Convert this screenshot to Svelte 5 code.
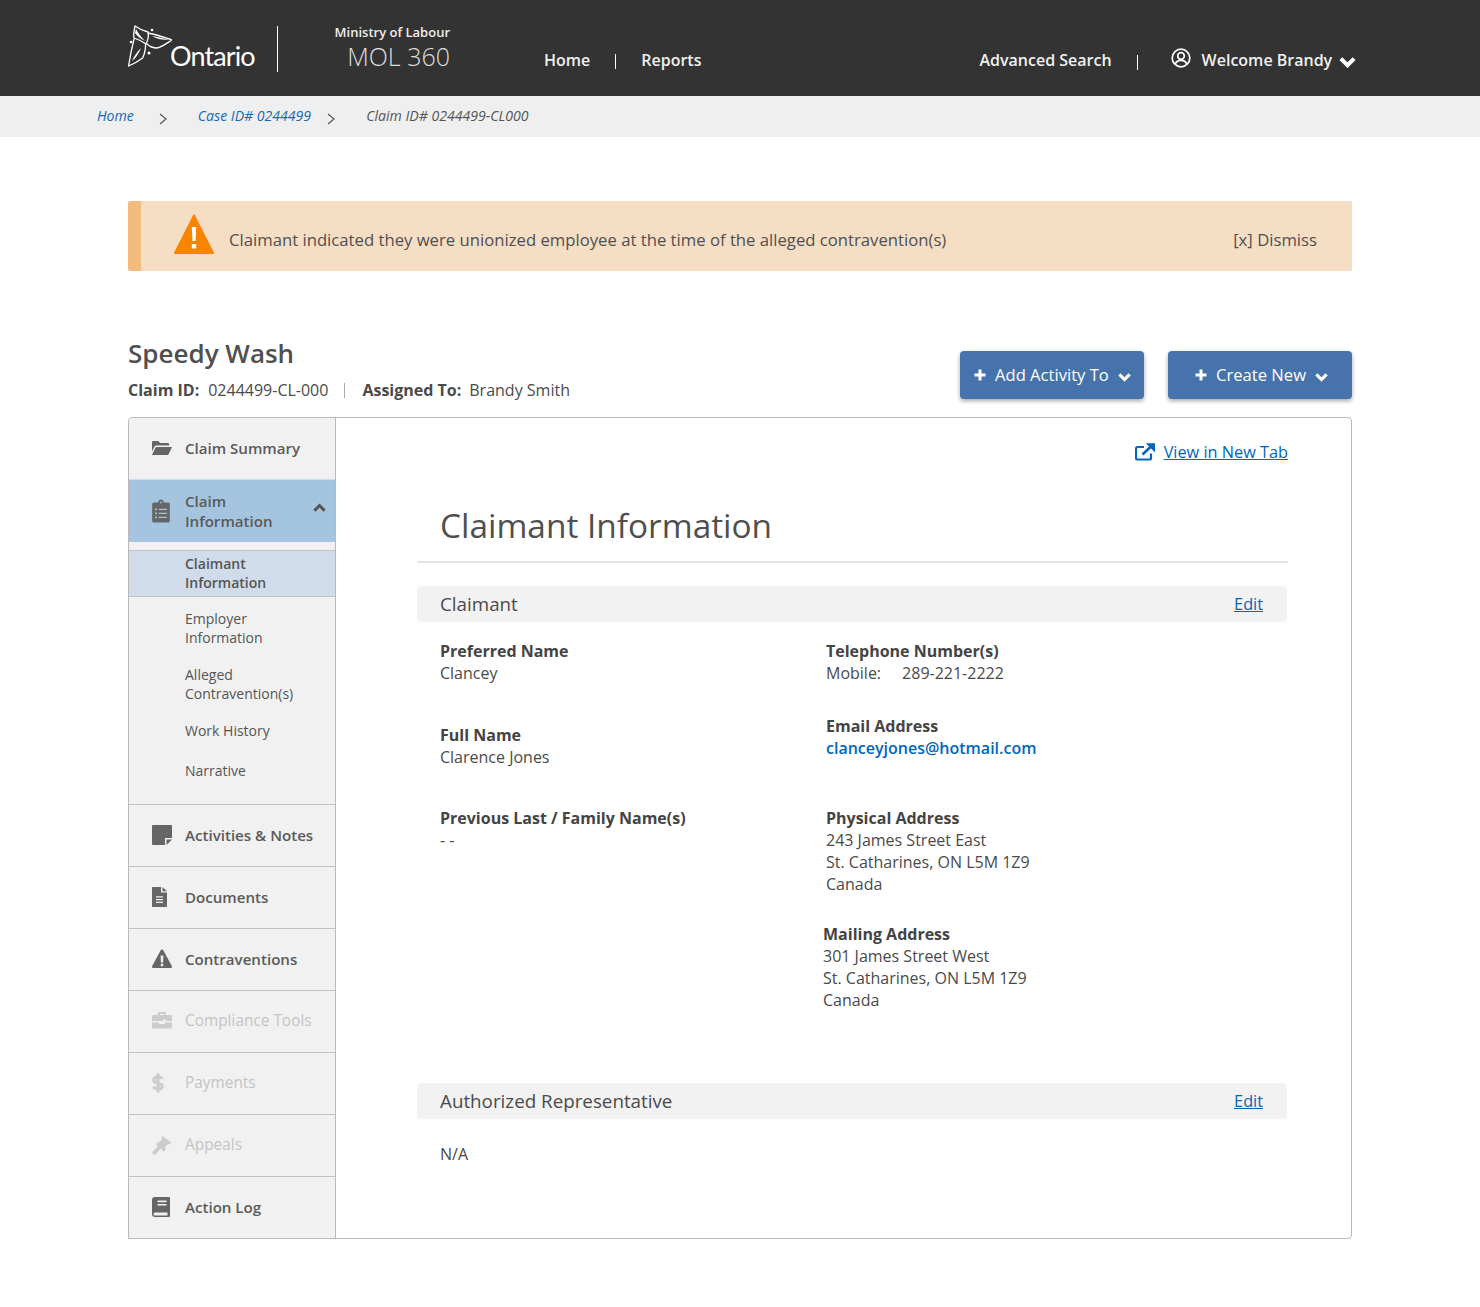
<script lang="ts">
	const subItems = [
		{ label: ['Claimant', 'Information'], active: true },
		{ label: ['Employer', 'Information'] },
		{ label: ['Alleged', 'Contravention(s)'] },
		{ label: ['Work History'] },
		{ label: ['Narrative'] }
	];
	const lowerItems = [
		{ id: 'note', label: 'Activities & Notes' },
		{ id: 'doc', label: 'Documents' },
		{ id: 'warn', label: 'Contraventions' },
		{ id: 'tools', label: 'Compliance Tools', disabled: true },
		{ id: 'dollar', label: 'Payments', disabled: true },
		{ id: 'gavel', label: 'Appeals', disabled: true },
		{ id: 'book', label: 'Action Log' }
	];
</script>

{#snippet chevron(cls: string)}
	<svg class={cls} viewBox="0 0 14 10" aria-hidden="true"><path d="M1.500 2.200 7 7.700l5.500-5.500" fill="none" stroke="currentColor" stroke-width="3.400" /></svg>
{/snippet}

{#snippet plus()}
	<svg class="plus" viewBox="0 0 12 12" aria-hidden="true"><path d="M6 .5v11M.5 6h11" stroke="currentColor" stroke-width="3" /></svg>
{/snippet}

{#snippet navIcon(id: string)}
	{#if id === 'note'}
		<svg class="nav-icon" viewBox="0 0 20 20"><path d="M1 0h18a1 1 0 0 1 1 1v12h-7v7H1a1 1 0 0 1-1-1V1a1 1 0 0 1 1-1zM14.500 14.500H20L14.500 20z" fill="currentColor" /></svg>
	{:else if id === 'doc'}
		<svg class="nav-icon" viewBox="0 0 20 20"><path fill-rule="evenodd" d="M0 .8A.8.8 0 0 1 .8 0H9v5.500h6v13.700a.8.8 0 0 1-.8.8H.8a.8.8 0 0 1-.8-.8zM10.500 0 15 4.200h-4.500zM4 9.300v1.300h7V9.300zm0 2.700v1.300h7V12zm0 2.700V16h7v-1.300z" fill="currentColor" /></svg>
	{:else if id === 'warn'}
		<svg class="nav-icon" viewBox="0 0 20 20"><path fill-rule="evenodd" d="M10 .5c.6 0 1 .3 1.300.8l8.500 15.800c.5 1-.2 1.900-1.200 1.900H1.400c-1 0-1.700-.9-1.200-1.900L8.700 1.300C9 .8 9.400.5 10 .5zM8.600 6.500l.3 7h2.200l.3-7zm1.400 8.100a1.400 1.400 0 1 0 0 2.800 1.400 1.400 0 0 0 0-2.800z" fill="currentColor" /></svg>
	{:else if id === 'tools'}
		<svg class="nav-icon" viewBox="0 0 20 20"><path fill-rule="evenodd" d="M6 4V2.500C6 1.700 6.700 1 7.500 1h5c.8 0 1.500.7 1.500 1.500V4h4.500c.8 0 1.500.7 1.500 1.500V10h-6V8.500h-3V10H0V5.500C0 4.700.7 4 1.500 4zm2-1v1h4V3zM0 11.500h7V13h6v-1.500h7V16c0 .8-.7 1.500-1.500 1.500h-17C.7 17.500 0 16.800 0 16z" fill="currentColor" /></svg>
	{:else if id === 'dollar'}
		<svg class="nav-icon" viewBox="2 0 20 20"><path d="M12.200 6C11.600 4.600 10 3.900 8.200 3.900 5.700 3.800 3.700 5 3.700 7c0 4.500 8.700 2.300 8.700 6.200 0 2-2.100 3.100-4.400 3C5.800 16.100 4 15 3.300 13.600M8 .5v19" fill="none" stroke="currentColor" stroke-width="3" /></svg>
	{:else if id === 'gavel'}
		<svg class="nav-icon" viewBox="0 0 20 20"><path d="m10.500 1 8.800 6.500-1.400 1.900-2-.5-2.900 3.900.6 2-1.500 1.900L3.800 9.200l1.400-1.900 2 .3 3-3.900-.9-2zM6.500 10.500l3 2.300-5.800 6.300c-.7.700-1.800.8-2.600.2-.9-.7-1-1.900-.3-2.700z" fill="currentColor" /></svg>
	{:else if id === 'book'}
		<svg class="nav-icon" viewBox="0 0 20 20"><path fill-rule="evenodd" d="M3 0h14a1 1 0 0 1 1 1v18a1 1 0 0 1-1 1H3a3 3 0 0 1-3-3V3a3 3 0 0 1 3-3zm2.500 3.500v1.700h9V3.500zm0 3.400v1.700h9V6.900zM3 15.500a1.500 1.500 0 0 0 0 3h12.500v-3z" fill="currentColor" /></svg>
	{/if}
{/snippet}

<header class="topbar">
	<div class="logo">
		<svg class="trillium" viewBox="0 0 44 42" aria-hidden="true">
			<g fill="none" stroke="#fff" stroke-width="1.300" stroke-linejoin="round" stroke-linecap="round">
				<path d="M7 1c-1 5-2 9-1 12 3 1 8 3 12 6 2-4 3-8 2-12C16 6 11 4 7 1z" />
				<path d="M20 8c7 1 15 4 24 7-5 3-10 7-15 8-3 0-7-1-10-4" />
				<path d="M6 14C4 22 2 32 .6 41c5-2 10-5 14-8 2-4 3-9 3-14" />
			</g>
			<path d="M8 4c2 4 5 8 9 12-4-2-8-5-10-8zM24 11c6 1 11 2 17 4-6 0-12-1-17-4zM4 36c2-5 5-9 9-13-2 5-5 10-9 13z" fill="#fff" />
			<circle cx="24" cy="5" r="1.300" fill="#fff" />
			<circle cx="21" cy="28" r="1.500" fill="#fff" />
			<circle cx="3" cy="17" r="1.300" fill="#fff" />
		</svg>
		<span class="wordmark">Ontario</span>
	</div>
	<div class="brand-divider"></div>
	<div class="app-name">
		<div class="ministry">Ministry of Labour</div>
		<div class="mol">MOL 360</div>
	</div>
	<nav class="main-nav">
		<a href="#home">Home</a>
		<span class="nav-sep"></span>
		<a href="#reports">Reports</a>
	</nav>
	<div class="user-nav">
		<a href="#search">Advanced Search</a>
		<span class="nav-sep user-sep"></span>
		<svg class="avatar" viewBox="0 0 20 20" aria-hidden="true">
			<circle cx="10" cy="10" r="8.800" fill="none" stroke="#fff" stroke-width="1.700" />
			<circle cx="10" cy="8" r="3.300" fill="none" stroke="#fff" stroke-width="1.700" />
			<path d="M4.300 16c1-2.500 3-3.600 5.700-3.600s4.700 1.100 5.700 3.600" fill="none" stroke="#fff" stroke-width="1.700" />
		</svg>
		<a class="welcome" href="#user">Welcome Brandy</a>
		{@render chevron('user-chevron')}
	</div>
</header>

<div class="breadcrumb">
	<a href="#home">Home</a>
	<svg class="crumb-sep first" viewBox="0 0 8 12"><path d="m1 1 6 5-6 5" fill="none" stroke="#555" stroke-width="1.200" /></svg>
	<a href="#case">Case ID# 0244499</a>
	<svg class="crumb-sep" viewBox="0 0 8 12"><path d="m1 1 6 5-6 5" fill="none" stroke="#555" stroke-width="1.200" /></svg>
	<span>Claim ID# 0244499-CL000</span>
</div>

<main class="page">
	<div class="alert">
		<svg class="alert-icon" viewBox="0 0 40 40" aria-hidden="true">
			<path d="M20 1 39.500 39.500H.5z" fill="#f98400" stroke="#f98400" stroke-width="1.500" stroke-linejoin="round" />
			<path d="M17.800 13h4.400l-.6 14h-3.200zM17.800 30h4.400v4.400h-4.400z" fill="#fff" />
		</svg>
		<span class="alert-text">Claimant indicated they were unionized employee at the time of the alleged contravention(s)</span>
		<span class="dismiss">[x] Dismiss</span>
	</div>

	<div class="claim-head">
		<div>
			<h1>Speedy Wash</h1>
			<div class="claim-meta">
				<b>Claim ID:</b><span>0244499-CL-000</span><i></i><b>Assigned To:</b><span>Brandy Smith</span>
			</div>
		</div>
		<div class="actions">
			<button class="add">{@render plus()}Add Activity To{@render chevron('btn-chevron')}</button>
			<button class="create">{@render plus()}Create New{@render chevron('btn-chevron')}</button>
		</div>
	</div>

	<div class="panel">
		<aside class="sidebar">
			<div class="nav-item summary">
				<svg class="nav-icon" viewBox="0 0 20 20"><path d="M0 4.200C0 3.500.5 3 1.200 3h5l2 2h7.600c.7 0 1.200.5 1.200 1.200V7.500H4.500c-.9 0-1.700.5-2.100 1.300L0 13.500zM4.600 9H20l-3.400 7.200c-.2.500-.7.800-1.200.8H0l3.400-7.200c.2-.5.700-.8 1.200-.8z" fill="currentColor" /></svg>
				<span>Claim Summary</span>
			</div>
			<div class="nav-item open">
				<svg class="nav-icon" viewBox="0 0 20 24" preserveAspectRatio="none"><path fill-rule="evenodd" d="M7 3.500C7 1.800 8.300.5 10 .5s3 1.300 3 3h5c1 0 1.800.8 1.800 1.800v16.400c0 1-.8 1.800-1.800 1.800H2c-1 0-1.800-.8-1.800-1.800V5.300c0-1 .8-1.800 1.800-1.800zm2 0a1 1 0 1 0 2 0 1 1 0 0 0-2 0zM3.500 9.500v1.800h2V9.500zm4 .2v1.400h9V9.700zm-4 3.800v1.800h2v-1.800zm4 .2v1.400h9v-1.400zm-4 3.800v1.800h2v-1.800zm4 .2v1.400h9v-1.400z" fill="currentColor" /></svg>
				<span>Claim<br />Information</span>
				<svg class="caret" viewBox="0 0 14 10"><path d="M1.500 7.800 7 2.300l5.500 5.500" fill="none" stroke="currentColor" stroke-width="3.200" /></svg>
			</div>
			<ul class="sub-nav">
				{#each subItems as item}
					<li class:active={item.active}>
						{#each item.label as line}<span>{line}</span>{/each}
					</li>
				{/each}
			</ul>
			{#each lowerItems as item}
				<div class="nav-item" class:disabled={item.disabled}>
					{@render navIcon(item.id)}
					<span>{item.label}</span>
				</div>
			{/each}
		</aside>

		<section class="content">
			<div class="tab-link">
				<svg viewBox="0 0 20 18" aria-hidden="true">
					<path d="M16 10.500V15a1.500 1.500 0 0 1-1.500 1.500H2.500A1.500 1.500 0 0 1 1 15V5.500A1.500 1.500 0 0 1 2.500 4H9" fill="none" stroke="#0066bb" stroke-width="2.200" />
					<path d="M7.500 11.500 17 2.500" fill="none" stroke="#0066bb" stroke-width="2.600" />
					<path d="M12.500 1H19.500V8z" fill="#0066bb" stroke="#0066bb" stroke-width="1.400" />
				</svg>
				<a href="#tab">View in New Tab</a>
			</div>
			<h2>Claimant Information</h2>

			<div class="section-bar">
				<h3>Claimant</h3>
				<a href="#edit">Edit</a>
			</div>
			<div class="fields">
				<div class="col left">
					<div class="field">
						<strong>Preferred Name</strong>
						<span>Clancey</span>
					</div>
					<div class="field">
						<strong>Full Name</strong>
						<span>Clarence Jones</span>
					</div>
					<div class="field previous">
						<strong>Previous Last / Family Name(s)</strong>
						<span>- -</span>
					</div>
				</div>
				<div class="col right">
					<div class="field phone">
						<strong>Telephone Number(s)</strong>
						<span><em>Mobile:</em>289-221-2222</span>
					</div>
					<div class="field email">
						<strong>Email Address</strong>
						<a href="#mail">clanceyjones@hotmail.com</a>
					</div>
					<div class="field physical">
						<strong>Physical Address</strong>
						<span>243 James Street East</span>
						<span>St. Catharines, ON L5M 1Z9</span>
						<span>Canada</span>
					</div>
					<div class="field mailing">
						<strong>Mailing Address</strong>
						<span>301 James Street West</span>
						<span>St. Catharines, ON L5M 1Z9</span>
						<span>Canada</span>
					</div>
				</div>
			</div>

			<div class="section-bar rep">
				<h3>Authorized Representative</h3>
				<a href="#edit">Edit</a>
			</div>
			<p class="na">N/A</p>
		</section>
	</div>
</main>

<style>
	:global(body) {
		margin: 0;
		font-family: 'Open Sans', 'Noto Sans', sans-serif;
		color: #4a4a4a;
		background: #fff;
	}

	a {
		color: inherit;
		text-decoration: none;
	}

	.topbar {
		height: 96px;
		box-sizing: border-box;
		background: #333333;
		color: #fff;
		display: flex;
		align-items: flex-start;
		padding-left: 128px;
	}

	.logo {
		width: 149px;
		height: 46px;
		margin-top: 25px;
		display: flex;
		align-items: flex-end;
	}

	.trillium {
		width: 44px;
		height: 42px;
		flex: none;
		margin-bottom: 4px;
	}

	.wordmark {
		font-family: 'Lato', sans-serif;
		font-size: 27px;
		line-height: 34px;
		letter-spacing: -0.9px;
		margin-left: -2px;
		margin-bottom: -2px;
	}

	.brand-divider {
		width: 1px;
		height: 46px;
		margin-top: 26px;
		background: #fff;
	}

	.app-name {
		margin-left: 56px;
		width: 116px;
		text-align: right;
		padding-top: 24px;
	}

	.ministry {
		font-size: 13px;
		font-weight: 600;
		line-height: 17px;
		color: #eee;
		white-space: nowrap;
	}

	.mol {
		font-size: 25px;
		font-weight: 300;
		line-height: 32px;
		margin-top: -1px;
		color: #ddd;
		white-space: nowrap;
	}

	.main-nav,
	.user-nav {
		display: flex;
		align-items: center;
		font-size: 16px;
		font-weight: 600;
		line-height: 22px;
		margin-top: 49px;
		color: #f0f0f0;
	}

	.main-nav {
		margin-left: 94px;
	}

	.nav-sep {
		width: 1px;
		height: 15px;
		background: #fff;
		margin: 2px 25px 0 25px;
	}

	.user-nav {
		margin-left: 278px;
	}

	.user-sep {
		margin: 4px 33px 0 25px;
	}

	.avatar {
		width: 20px;
		height: 20px;
		margin: -4px 11px 0 0;
	}

	.user-chevron {
		width: 17px;
		height: 12px;
		margin: 3px 0 0 7px;
		color: #fff;
	}

	.breadcrumb {
		height: 41px;
		box-sizing: border-box;
		background: #efefef;
		padding: 0 0 2px 97px;
		display: flex;
		align-items: center;
		font-size: 14.100px;
		font-style: italic;
		color: #555;
	}

	.breadcrumb a {
		color: #1668b5;
	}

	.crumb-sep {
		width: 8px;
		height: 12px;
		margin: 7px 31px 0 16px;
	}

	.crumb-sep.first {
		margin-left: 25px;
	}

	.page {
		width: 1224px;
		margin: 64px auto 0;
		padding-bottom: 68px;
	}

	.alert {
		height: 70px;
		box-sizing: border-box;
		background: #f5dec4;
		border-left: 13px solid #f3bc7d;
		border-radius: 2px;
		display: flex;
		align-items: center;
		padding: 0 35px 0 33px;
		font-size: 16.700px;
		font-weight: 500;
		color: #505050;
	}

	.alert-icon {
		width: 40px;
		height: 40px;
		flex: none;
		margin-right: 15px;
		margin-top: -4px;
	}

	.alert-text,
	.dismiss {
		padding-top: 6px;
	}

	.alert-text {
		flex: 1;
	}

	.claim-head {
		display: flex;
		justify-content: space-between;
		margin-top: 64px;
		height: 82px;
	}

	h1 {
		margin: 0;
		font-size: 26px;
		font-weight: 600;
		line-height: 36px;
		color: #4f4f4f;
	}

	.claim-meta {
		display: flex;
		align-items: center;
		margin-top: 8px;
		font-size: 16px;
		line-height: 22px;
	}

	.claim-meta b {
		font-weight: 700;
		margin-right: 8px;
	}

	.claim-meta b:first-child {
		margin-right: 9px;
	}

	.claim-meta i {
		width: 1px;
		height: 15px;
		background: #aaa;
		margin: 0 17px 0 16px;
	}

	.actions {
		display: flex;
		gap: 24px;
		margin-top: 16px;
		height: 48px;
	}

	button {
		height: 48px;
		box-sizing: border-box;
		border: none;
		border-radius: 4px;
		background: #4673ab;
		color: #fff;
		font: 500 16.600px/22px 'Open Sans', sans-serif;
		box-shadow: 0 2px 4px rgba(0, 0, 0, 0.35);
		display: flex;
		align-items: center;
		padding: 0;
	}

	.add {
		width: 184px;
		padding-left: 14px;
	}

	.create {
		width: 184px;
		padding-left: 27px;
	}

	.plus {
		width: 12px;
		height: 12px;
		margin-right: 9px;
	}

	.btn-chevron {
		width: 13px;
		height: 10px;
		margin: 3px 0 0 9px;
	}

	.panel {
		display: flex;
		height: 822px;
		box-sizing: border-box;
		border: 1px solid #b9b9b9;
		border-radius: 4px 4px 4px 0;
	}

	.sidebar {
		width: 206px;
		flex: none;
		background: #f1f1f1;
		border-right: 1px solid #b9b9b9;
		border-radius: 4px 0 0 0;
	}

	.nav-item {
		height: 62px;
		box-sizing: border-box;
		border-top: 1px solid #c2c2c2;
		display: flex;
		align-items: center;
		padding: 0 0 2px 23px;
		font-size: 15.100px;
		font-weight: 600;
		line-height: 20px;
		color: #5a5a5a;
	}

	.nav-item > span {
		margin-left: 13px;
		white-space: nowrap;
	}

	.nav-icon {
		width: 20px;
		height: 20px;
		flex: none;
		color: #666;
	}

	.summary {
		height: 61px;
		border-top: none;
	}

	.open {
		height: 63px;
		background: #a5c4e0;
		position: relative;
		border-top: 1px solid #d0dcea;
		padding-bottom: 0;
	}

	.open .nav-icon {
		width: 18px;
		height: 24px;
	}

	.open > span {
		margin-left: 15px;
	}

	.caret {
		position: absolute;
		left: 184px;
		top: 23px;
		width: 13px;
		height: 10px;
		color: #555;
	}

	.sub-nav {
		list-style: none;
		margin: 0;
		padding: 8px 0 24px;
		font-size: 14px;
		line-height: 19px;
		font-weight: 400;
		color: #555;
	}

	.sub-nav li {
		padding: 6px 0 12px 56px;
	}

	.sub-nav li span {
		display: block;
	}

	.sub-nav li.active {
		background: #d0dcea;
		border-top: 1px solid #c2c2c2;
		border-bottom: 1px solid #c2c2c2;
		padding: 3px 0 4px 56px;
		font-weight: 600;
		margin-bottom: 12px;
	}

	.sub-nav li:nth-child(2),
	.sub-nav li:nth-child(3) {
		padding-top: 0;
		padding-bottom: 18px;
	}

	.sub-nav li:nth-child(4) {
		padding: 0 0 21px 56px;
	}

	.sub-nav li:nth-child(5) {
		padding: 0 0 0 56px;
	}

	.disabled {
		color: #c4c4c4;
		font-size: 15.400px;
		font-weight: 500;
	}

	.disabled .nav-icon {
		color: #cccccc;
	}

	.content {
		flex: 1;
		padding: 0 63px 0 81px;
		min-width: 0;
	}

	.tab-link {
		display: flex;
		justify-content: flex-end;
		align-items: center;
		margin-top: 23px;
		font-size: 16.300px;
		line-height: 22px;
		font-weight: 500;
	}

	.tab-link svg {
		width: 20px;
		height: 18px;
		margin-right: 9px;
	}

	.tab-link a,
	.section-bar a,
	.email a {
		color: #0066bb;
	}

	.tab-link a,
	.section-bar a {
		text-decoration: underline;
	}

	h2 {
		margin: 40px 0 23px;
		padding: 0 0 14px 23px;
		font-size: 33.400px;
		font-weight: 500;
		line-height: 44px;
		color: #4f4f4f;
		border-bottom: 2px solid #e3e3e3;
	}

	.section-bar {
		height: 36px;
		width: 870px;
		box-sizing: border-box;
		background: #f2f2f2;
		border-radius: 4px;
		display: flex;
		align-items: center;
		justify-content: space-between;
		padding: 0 24px 0 23px;
	}

	.section-bar h3 {
		margin: 0;
		font-size: 18.800px;
		font-weight: 500;
		line-height: 26px;
	}

	.section-bar a {
		font-size: 16.300px;
		font-weight: 500;
	}

	.fields {
		display: flex;
		height: 461px;
		padding: 18px 0 0 23px;
		box-sizing: border-box;
		font-size: 16px;
		line-height: 22px;
	}

	.col {
		display: flex;
		flex-direction: column;
	}

	.left {
		width: 386px;
		gap: 40px;
	}

	.previous {
		margin-top: -1px;
	}

	.field {
		display: flex;
		flex-direction: column;
	}

	.field strong {
		font-weight: 700;
		color: #444;
	}

	.phone em {
		font-style: normal;
		margin-right: 21px;
	}

	.email {
		margin-top: 31px;
	}

	.email a {
		font-weight: 600;
	}

	.physical {
		margin-top: 48px;
	}

	.mailing {
		margin-top: 28px;
		margin-left: -3px;
	}

	.na {
		margin: 24px 0 0 23px;
		font-size: 16px;
		line-height: 22px;
	}
</style>
